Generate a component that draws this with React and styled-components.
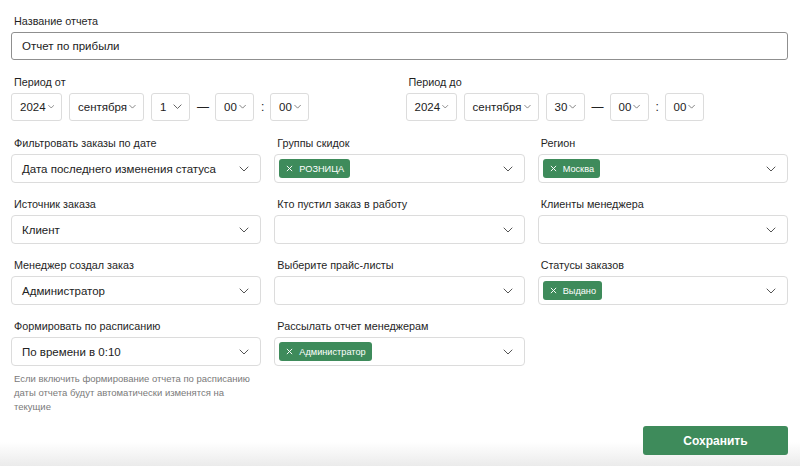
import React from "react";
import styled, { createGlobalStyle } from "styled-components";

const Global = createGlobalStyle`
  html, body { margin: 0; padding: 0; background: #fff; }
  body { font-family: "Liberation Sans", Arial, sans-serif; color: #222; }
  * { box-sizing: border-box; }
`;

const Page = styled.div`
  width: 800px;
  height: 466px;
  padding: 14px 12px 0 11px;
  background: linear-gradient(to bottom, #fff 0, #fff 442px, #ebebeb 466px);
  display: flex;
  flex-direction: column;
`;

const Field = styled.div`
  display: flex;
  flex-direction: column;
  min-width: 0;
`;

const Label = styled.div`
  font-size: 10.8px;
  line-height: 14px;
  padding-left: 3px;
  margin-bottom: 4px;
  color: #1f1f1f;
`;

const TextInput = styled.div`
  height: 28px;
  border: 1px solid #8f8f8f;
  border-radius: 3px;
  display: flex;
  align-items: center;
  padding-left: 10px;
  font-size: 11.5px;
`;

const PeriodGrid = styled.div`
  margin-top: 15px;
  display: grid;
  grid-template-columns: 1fr 1fr;
  column-gap: 12px;
`;

const DateRow = styled.div`
  display: flex;
  align-items: center;
  gap: 7px;
`;

const Small = styled.div`
  height: 28px;
  width: ${(p) => p.$w}px;
  border: 1px solid #dcdcdc;
  border-radius: 3px;
  display: flex;
  align-items: center;
  justify-content: ${(p) => (p.$spread ? "space-between" : "flex-start")};
  gap: 2px;
  padding: 0 7px 0 8px;
  font-size: 11.5px;
  color: #222;
`;

const Sep = styled.span`
  font-size: 12px;
  width: ${(p) => p.$w}px;
  text-align: center;
  color: #222;
`;

const Grid = styled.div`
  margin-top: 15px;
  display: grid;
  grid-template-columns: repeat(3, 1fr);
  column-gap: 13px;
  row-gap: 14px;
`;

const Select = styled.div`
  height: 29px;
  border: 1px solid #dcdcdc;
  border-radius: 4px;
  display: flex;
  align-items: center;
  padding: 0 11px 0 ${(p) => (p.$tag ? 4 : 10)}px;
  font-size: 11.5px;
  color: #222;
`;

const Value = styled.div`
  flex: 1;
  min-width: 0;
  white-space: nowrap;
`;

const Tag = styled.span`
  display: inline-flex;
  align-items: center;
  gap: 6px;
  height: 19px;
  padding: 0 6px 0 7px;
  background: #3e8b5b;
  border-radius: 3px;
  color: #fff;
  font-size: 9.2px;
`;

const Hint = styled.div`
  margin-top: 6px;
  padding-left: 3px;
  font-size: 9.5px;
  line-height: 14px;
  color: #7a7a7a;
`;

const Footer = styled.div`
  margin-top: 12px;
  display: flex;
  justify-content: flex-end;
`;

const Button = styled.button`
  width: 145px;
  height: 29px;
  border: none;
  border-radius: 3px;
  background: #3e8b5b;
  color: #fff;
  font-family: inherit;
  font-size: 12px;
  font-weight: bold;
`;

const Chevron = ({ size = 9 }) => (
  <svg width={size} height={size * 0.6} viewBox="0 0 10 6" fill="none">
    <path d="M1 1l4 4 4-4" stroke="#555" strokeWidth="1" strokeLinecap="round" strokeLinejoin="round" />
  </svg>
);

const Cross = () => (
  <svg width="7" height="7" viewBox="0 0 8 8">
    <path d="M1 1l6 6M7 1L1 7" stroke="#fff" strokeWidth="1.1" />
  </svg>
);

const DateSel = ({ v, w, spread }) => (
  <Small $w={w} $spread={spread}>
    <span>{v}</span>
    <Chevron />
  </Small>
);

const DatePicker = ({ day }) => (
  <DateRow>
    <DateSel v="2024" w={51} />
    <DateSel v="сентября" w={75} />
    <DateSel v={day} w={39} spread={day === "1"} />
    <Sep $w={11}>—</Sep>
    <DateSel v="00" w={39} />
    <Sep $w={2}>:</Sep>
    <DateSel v="00" w={39} />
  </DateRow>
);

const SelectField = ({ label, value, tag, children }) => (
  <Field>
    <Label>{label}</Label>
    <Select $tag={!!tag}>
      <Value>
        {tag ? (
          <Tag>
            <Cross />
            {tag}
          </Tag>
        ) : (
          value
        )}
      </Value>
      <Chevron size={10} />
    </Select>
    {children}
  </Field>
);

export default function App() {
  return (
    <>
      <Global />
      <Page>
        <Field>
          <Label>Название отчета</Label>
          <TextInput>Отчет по прибыли</TextInput>
        </Field>
        <PeriodGrid>
          <Field>
            <Label>Период от</Label>
            <DatePicker day="1" />
          </Field>
          <Field>
            <Label>Период до</Label>
            <DatePicker day="30" />
          </Field>
        </PeriodGrid>
        <Grid>
          <SelectField label="Фильтровать заказы по дате" value="Дата последнего изменения статуса" />
          <SelectField label="Группы скидок" tag="РОЗНИЦА" />
          <SelectField label="Регион" tag="Москва" />
          <SelectField label="Источник заказа" value="Клиент" />
          <SelectField label="Кто пустил заказ в работу" value="" />
          <SelectField label="Клиенты менеджера" value="" />
          <SelectField label="Менеджер создал заказ" value="Администратор" />
          <SelectField label="Выберите прайс-листы" value="" />
          <SelectField label="Статусы заказов" tag="Выдано" />
          <SelectField label="Формировать по расписанию" value="По времени в 0:10">
            <Hint>
              Если включить формирование отчета по расписанию даты отчета будут автоматически изменятся на
              текущие
            </Hint>
          </SelectField>
          <SelectField label="Рассылать отчет менеджерам" tag="Администратор" />
        </Grid>
        <Footer>
          <Button>Сохранить</Button>
        </Footer>
      </Page>
    </>
  );
}
